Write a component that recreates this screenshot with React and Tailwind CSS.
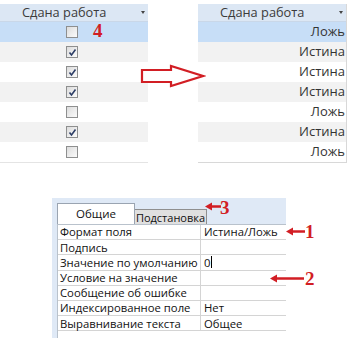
import React from "react";

const checks = [false, true, true, true, false, true, false];
const rowBg = (i) =>
  i === 0 ? "bg-[#c7def7]" : i % 2 === 1 ? "bg-[#f2f2f2]" : "bg-white";

function Check({ on }) {
  return (
    <div className="w-[12px] h-[12px] border border-[#8e8f8f] bg-gradient-to-br from-[#dcdcdc] to-[#fbfbfb] flex items-center justify-center">
      {on && (
        <svg width="9" height="9" viewBox="0 0 9 9">
          <path d="M1.5 4.5 L3.5 7 L7.5 1.5" fill="none" stroke="#2c3d66" strokeWidth="1.6" />
        </svg>
      )}
    </div>
  );
}

function Header() {
  return (
    <div className="h-[18px] bg-[#dce7f4] flex items-center relative border-b border-[#c9d7e8]">
      <span className="pl-[22px] text-[12.8px] text-[#3b3b3b] leading-none whitespace-nowrap">Сдана работа</span>
      <span className="absolute right-[3px] top-[7px] w-0 h-0 border-l-[2.5px] border-r-[2.5px] border-t-[3px] border-l-transparent border-r-transparent border-t-[#444]" />
    </div>
  );
}

const props = [
  ["Формат поля", "Истина/Ложь"],
  ["Подпись", ""],
  ["Значение по умолчанию", "0"],
  ["Условие на значение", ""],
  ["Сообщение об ошибке", ""],
  ["Индексированное поле", "Нет"],
  ["Выравнивание текста", "Общее"],
];

const red = "#d21e24";

function LeftArrow({ len }) {
  return (
    <svg width={len + 2} height="9" viewBox={`0 0 ${len + 2} 9`}>
      <path d={`M0 4.5 L7 0.5 L7 3.3 L${len + 2} 3.3 L${len + 2} 5.7 L7 5.7 L7 8.5 Z`} fill={red} />
    </svg>
  );
}

const serif = { fontFamily: '"Liberation Serif", serif' };

export default function App() {
  return (
    <div
      className="w-[352px] h-[338px] bg-white relative overflow-hidden"
      style={{ fontFamily: '"Open Sans", "Noto Sans", sans-serif' }}
    >
      <div className="flex pt-[4px]">
        <div className="w-[148px] border-b border-[#e4e4e4]">
          <Header />
          {checks.map((c, i) => (
            <div key={i} className={`h-[20px] flex items-center pl-[66px] ${rowBg(i)}`}>
              <Check on={c} />
            </div>
          ))}
        </div>
        <div className="w-[50px]" />
        <div className="w-[149px] border-b border-r border-[#d8d8d8]">
          <Header />
          {checks.map((c, i) => (
            <div
              key={i}
              className={`h-[20px] flex items-center justify-end pr-[1px] text-[13px] text-[#333] ${rowBg(i)}`}
            >
              {c ? "Истина" : "Ложь"}
            </div>
          ))}
        </div>
      </div>

      <div className="mt-[35px] ml-[52px] w-[234px] h-[140px] bg-[#dfe9f6] pl-[5px] pt-[5px]">
        <div className="flex items-end h-[21px]">
          <div className="w-[78px] h-[21px] bg-white border border-b-0 border-[#9aa4b1] flex items-center justify-center text-[11.5px] text-[#111]">
            Общие
          </div>
          <div className="w-[72px] h-[15px] bg-[#e0e0e0] border border-l-0 border-b-0 border-[#8f8f8f] flex items-center justify-center text-[11px] text-[#111] leading-none whitespace-nowrap">
            Подстановка
          </div>
        </div>
        <div className="bg-white h-[120px] border-l border-t border-[#b9c2cc]">
          {props.map(([k, v], i) => (
            <div key={i} className="h-[15.2px] flex border-b border-[#d4d4d4] text-[11.3px] text-[#111] leading-none whitespace-nowrap">
              <div className="w-[143px] border-r border-[#d4d4d4] pl-[2px] flex items-center">{k}</div>
              <div className="flex-1 pl-[3px] flex items-center">
                {v}
                {i === 2 && <span className="ml-[1px] w-[1px] h-[12px] bg-black" />}
              </div>
            </div>
          ))}
        </div>
      </div>

      {/* big hollow arrow */}
      <svg className="absolute left-[140px] top-[64px]" width="66" height="24" viewBox="0 0 66 24">
        <path d="M2 6 L31 6 L31 2 L63 12 L31 22 L31 18 L2 18 Z" fill="none" stroke={red} strokeWidth="2.2" />
      </svg>

      {/* annotations */}
      <span className="absolute left-[93px] top-[21px] text-[19px] font-bold leading-none text-[#d21e24]" style={serif}>
        4
      </span>
      <div className="absolute left-[205px] top-[202px] flex items-center">
        <LeftArrow len={14} />
      </div>
      <span className="absolute left-[220px] top-[198px] text-[19px] font-bold leading-none text-[#d21e24]" style={serif}>
        3
      </span>
      <div className="absolute left-[286px] top-[227px] flex items-center">
        <LeftArrow len={17} />
      </div>
      <span className="absolute left-[305px] top-[222px] text-[19px] font-bold leading-none text-[#d21e24]" style={serif}>
        1
      </span>
      <div className="absolute left-[270px] top-[274px] flex items-center">
        <LeftArrow len={32} />
      </div>
      <span className="absolute left-[305px] top-[269px] text-[19px] font-bold leading-none text-[#d21e24]" style={serif}>
        2
      </span>
    </div>
  );
}
